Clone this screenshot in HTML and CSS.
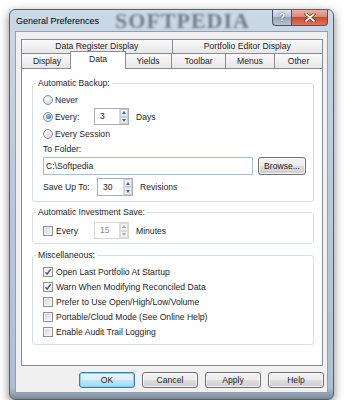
FILE: index.html
```html
<!DOCTYPE html>
<html lang="en">
<head>
    <meta charset="UTF-8">
    <title>General Preferences</title>
    <link rel="stylesheet" href="styles.css">
</head>
<body>
    <div class="window">
        <div class="titlebar">
            <span class="title">General Preferences</span>
            <span class="watermark">SOFTPEDIA</span>
            <div class="caps">
                <span class="cap cap-help">?</span>
                <span class="cap cap-close">
                    <svg width="12" height="9" viewBox="0 0 12 9">
                        <path d="M2 1 L10 8 M10 1 L2 8" stroke="#5a2418" stroke-width="3.2" stroke-linecap="round"/>
                        <path d="M2 1 L10 8 M10 1 L2 8" stroke="#fff" stroke-width="1.8" stroke-linecap="round"/>
                    </svg>
                </span>
            </div>
        </div>
        <div class="client">
            <div class="tabs">
                <div class="tab-row">
                    <div class="tab wide">Data Register Display</div>
                    <div class="tab wide last">Portfolio Editor Display</div>
                </div>
                <div class="tab-row">
                    <div class="tab t-display">Display</div>
                    <div class="tab t-data active">Data</div>
                    <div class="tab t-yields">Yields</div>
                    <div class="tab t-toolbar">Toolbar</div>
                    <div class="tab t-menus">Menus</div>
                    <div class="tab t-other last">Other</div>
                </div>
            </div>
            <div class="panel">
                <fieldset class="group backup">
                    <legend>Automatic Backup:</legend>
                    <div class="opt"><span class="radio"></span>Never</div>
                    <div class="opt">
                        <span class="radio on"></span>
                        <span class="opt-label">Every:</span>
                        <span class="spin"><span class="val">3</span><span class="arrows"><span class="up"></span><span class="down"></span></span></span>
                        <span class="unit">Days</span>
                    </div>
                    <div class="opt"><span class="radio"></span>Every Session</div>
                    <div class="folder-label">To Folder:</div>
                    <div class="folder-row">
                        <span class="textbox">C:\Softpedia</span>
                        <span class="btn browse">Browse...</span>
                    </div>
                    <div class="save-row">
                        <span class="save-label">Save Up To:</span>
                        <span class="spin wide-spin"><span class="val">30</span><span class="arrows"><span class="up"></span><span class="down"></span></span></span>
                        <span class="unit">Revisions</span>
                    </div>
                </fieldset>

                <fieldset class="group invest">
                    <legend>Automatic Investment Save:</legend>
                    <div class="opt">
                        <span class="check"></span>
                        <span class="opt-label check-label">Every</span>
                        <span class="spin disabled"><span class="val">15</span><span class="arrows"><span class="up"></span><span class="down"></span></span></span>
                        <span class="unit">Minutes</span>
                    </div>
                </fieldset>

                <fieldset class="group misc">
                    <legend>Miscellaneous:</legend>
                    <div class="item"><span class="check on"><svg width="8" height="8" viewBox="0 0 8 8"><path d="M1.5 4.2 L3.2 6.2 L6.6 1.2" fill="none" stroke="#3c5489" stroke-width="1.4"/></svg></span>Open Last Portfolio At Startup</div>
                    <div class="item"><span class="check on"><svg width="8" height="8" viewBox="0 0 8 8"><path d="M1.5 4.2 L3.2 6.2 L6.6 1.2" fill="none" stroke="#3c5489" stroke-width="1.4"/></svg></span>Warn When Modifying Reconciled Data</div>
                    <div class="item"><span class="check"></span>Prefer to Use Open/High/Low/Volume</div>
                    <div class="item"><span class="check"></span>Portable/Cloud Mode (See Online Help)</div>
                    <div class="item"><span class="check"></span>Enable Audit Trail Logging</div>
                </fieldset>
            </div>
            <div class="actions">
                <span class="btn default">OK</span>
                <span class="btn">Cancel</span>
                <span class="btn">Apply</span>
                <span class="btn">Help</span>
            </div>
        </div>
    </div>
</body>
</html>
```

FILE: styles.css
```css
* {
    box-sizing: border-box;
}
body {
    margin: 0;
    background: #fff;
    font-family: "Liberation Sans", Arial, sans-serif;
    font-size: 8.6px;
    color: #1e1e1e;
}
.window {
    width: 325px;
    height: 391px;
    margin: 9px 0 0 9px;
    padding: 0 5px 6px;
    border: 1px solid #55626f;
    border-radius: 6px;
    background: linear-gradient(#cbd8e5, #bccbdb 40%, #aebfd0 97%, #7d8996);
    box-shadow: 0 3px 10px rgba(0, 0, 0, 0.5);
    display: flex;
    flex-direction: column;
}
.titlebar {
    height: 21px;
    display: flex;
    align-items: center;
    padding-left: 1px;
}
.title {
    font-size: 9px;
    color: #000;
}
.watermark {
    margin-left: 16px;
    font: bold 22px/21px "Liberation Serif", serif;
    letter-spacing: 1px;
    color: rgba(55, 66, 78, 0.6);
    filter: blur(1px);
}
.caps {
    margin-left: auto;
    align-self: flex-start;
    display: flex;
}
.cap {
    height: 16px;
    display: flex;
    align-items: center;
    justify-content: center;
    border: 1px solid #4a5665;
    border-top: none;
}
.cap-help {
    width: 19px;
    border-radius: 0 0 0 4px;
    border-right: none;
    background: linear-gradient(#dde6ef, #b9c6d4 45%, #95a5b7 50%, #b6c4d2);
    color: #fff;
    font-weight: bold;
    font-size: 10px;
    text-shadow: 0 0 2px #2c3a4a;
}
.cap-close {
    width: 37px;
    border-radius: 0 0 4px 0;
    background: linear-gradient(#eab0a3, #d98a78 45%, #c94a30 50%, #d7785c);
}
.client {
    flex: 1;
    background: #f0f0f0;
    border: 1px solid #8fa0b2;
    padding: 7px 0 0 5px;
}
.tabs {
    width: 302px;
}
.tab-row {
    display: flex;
}
.tab {
    height: 14px;
    border: 1px solid #898c95;
    border-right: none;
    border-bottom: none;
    background: linear-gradient(#fafafa, #e7e7e7);
    text-align: center;
    line-height: 13px;
    white-space: nowrap;
}
.tab-row + .tab-row .tab {
    height: 15px;
    line-height: 14px;
}
.tab.last {
    border-right: 1px solid #898c95;
}
.tab.wide {
    flex: 1;
}
.t-display { width: 51px; }
.t-yields { width: 47px; }
.t-toolbar { width: 54px; }
.t-menus { width: 49px; }
.t-other { width: 49px; }
.tab-row + .tab-row .tab.active {
    width: 56px;
    height: 18px;
    margin: -2px -2px -1px -2px;
    border-right: 1px solid #898c95;
    background: #fff;
    position: relative;
    z-index: 1;
    line-height: 14px;
}
.panel {
    width: 302px;
    height: 298px;
    border: 1px solid #898c95;
    background: #fff;
    padding: 8px 8px 0 10px;
}
.group {
    margin: 0;
    padding: 2px 0 5px 10px;
    border: 1px solid #d5dfe5;
    border-radius: 3px;
    min-width: 0;
}
.group legend {
    margin-left: -7px;
    padding: 0 2px;
    line-height: 12px;
}
.invest {
    margin-top: 4px;
    padding-top: 4px;
    padding-bottom: 4px;
}
.misc {
    margin-top: 5px;
    padding-top: 3px;
}
.opt {
    height: 17px;
    display: flex;
    align-items: center;
}
.radio {
    width: 10px;
    height: 10px;
    margin-right: 2px;
    border: 1px solid #8e8f8f;
    border-radius: 50%;
    background: radial-gradient(circle at 40% 35%, #fbfbfb, #d3d3d3);
    display: flex;
    align-items: center;
    justify-content: center;
}
.radio.on::after {
    content: "";
    width: 5px;
    height: 5px;
    border-radius: 50%;
    background: radial-gradient(circle at 40% 35%, #8fd0fb, #1b5f97);
}
.check {
    width: 10px;
    height: 10px;
    margin-right: 3px;
    border: 1px solid #8e8f8f;
    background: linear-gradient(135deg, #d6d6d6, #f9f9f9);
    box-shadow: inset 0 0 0 1px #f4f4f4;
    display: flex;
    align-items: center;
    justify-content: center;
}
.check.on {
    background: #f6f6f6;
}
.opt-label {
    width: 39px;
}
.check-label {
    width: 38px;
}
.spin {
    width: 35px;
    height: 17px;
    display: flex;
    border: 1px solid #abadb3;
    background: #fff;
}
.spin .val {
    flex: 1;
    padding-left: 5px;
    line-height: 15px;
}
.wide-spin {
    width: 36px;
    height: 18px;
}
.wide-spin .val {
    line-height: 16px;
}
.arrows {
    width: 9px;
    display: flex;
    flex-direction: column;
    border-left: 1px solid #d6dce4;
}
.arrows span {
    flex: 1;
    display: flex;
    align-items: center;
    justify-content: center;
    background: linear-gradient(#f6f8fb, #e3e9f0);
    border: 1px solid #c7d0db;
}
.arrows .up::after {
    content: "";
    border: 2px solid transparent;
    border-bottom: 3px solid #4e6289;
    border-top: none;
}
.arrows .down::after {
    content: "";
    border: 2px solid transparent;
    border-top: 3px solid #4e6289;
    border-bottom: none;
}
.spin.disabled {
    border-color: #d4d6da;
    color: #8d8d8d;
}
.spin.disabled .arrows span {
    background: #f4f4f4;
    border-color: #dcdcdc;
}
.spin.disabled .arrows .up::after {
    border-bottom-color: #a7a7a7;
}
.spin.disabled .arrows .down::after {
    border-top-color: #a7a7a7;
}
.unit {
    margin-left: 7px;
}
.folder-label {
    height: 15px;
    line-height: 15px;
}
.folder-row {
    display: flex;
    height: 18px;
}
.textbox {
    width: 210px;
    border: 1px solid #a6bdd3;
    padding-left: 2px;
    line-height: 16px;
}
.browse {
    width: 48px;
    margin-left: 5px;
    height: 18px;
}
.save-row {
    display: flex;
    align-items: center;
    margin-top: 3px;
    height: 18px;
}
.save-label {
    width: 54px;
}
.item {
    height: 15px;
    display: flex;
    align-items: center;
}
.actions {
    width: 303px;
    margin-top: 6px;
    display: flex;
    justify-content: flex-end;
    gap: 7px;
}
.btn {
    display: flex;
    align-items: center;
    justify-content: center;
    border: 1px solid #707070;
    border-radius: 3px;
    background: linear-gradient(#f2f2f2, #ebebeb 50%, #dddddd 50%, #cfcfcf);
    box-shadow: inset 0 0 0 1px rgba(255, 255, 255, 0.7);
}
.actions .btn {
    width: 56px;
    height: 16px;
}
.btn.default {
    border-color: #3c7fb1;
    background: linear-gradient(#eaf6fd, #d9f0fc 50%, #bee6fd 50%, #a7d9f5);
    box-shadow: inset 0 0 0 1px #7ed0f4;
}
```
